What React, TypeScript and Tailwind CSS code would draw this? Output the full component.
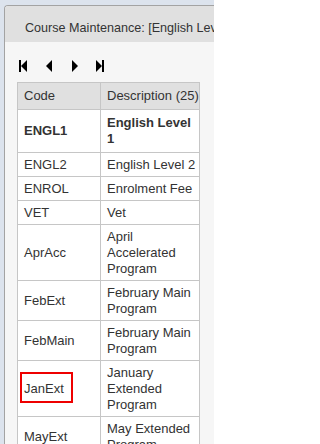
import React from "react";

type Row = { code: string; desc: string; bold?: boolean; mark?: boolean };

const rows: Row[] = [
  { code: "ENGL1", desc: "English Level 1", bold: true },
  { code: "ENGL2", desc: "English Level 2" },
  { code: "ENROL", desc: "Enrolment Fee" },
  { code: "VET", desc: "Vet" },
  { code: "AprAcc", desc: "April Accelerated Program" },
  { code: "FebExt", desc: "February Main Program" },
  { code: "FebMain", desc: "February Main Program" },
  { code: "JanExt", desc: "January Extended Program", mark: true },
  { code: "MayExt", desc: "May Extended Program" },
  { code: "NovExt", desc: "November Extended Program" },
];

function First() {
  return (
    <svg width="8" height="12" viewBox="0 0 8 12" className="block">
      <rect x="0" y="0" width="2" height="12" fill="#000" />
      <polygon points="8,0 2,6 8,12" fill="#000" />
    </svg>
  );
}
function Prev() {
  return (
    <svg width="8" height="12" viewBox="0 0 8 12" className="block">
      <polygon points="7,0 1,6 7,12" fill="#000" />
    </svg>
  );
}
function Next() {
  return (
    <svg width="8" height="12" viewBox="0 0 8 12" className="block">
      <polygon points="1,0 7,6 1,12" fill="#000" />
    </svg>
  );
}
function Last() {
  return (
    <svg width="8" height="12" viewBox="0 0 8 12" className="block">
      <polygon points="0,0 6,6 0,12" fill="#000" />
      <rect x="6" y="0" width="2" height="12" fill="#000" />
    </svg>
  );
}

export default function App() {
  return (
    <div className="w-[214px] h-[444px] overflow-hidden bg-[#dce3ed] pl-[4px] pt-[5px] font-['Liberation_Sans',Arial,sans-serif] text-[13px] text-[#333]">
      <div className="w-[240px] h-[480px] border-l border-t border-[#a3a3a3] rounded-tl-[4px] bg-[#f6f6f6] overflow-hidden">
        <div className="h-[36px] bg-[#e0e0e0] pl-[20px] pt-[14px] leading-[16px] text-[12.6px] whitespace-nowrap">
          Course Maintenance: [English Level 1]
        </div>
        <div className="pl-[12px]">
          <div className="flex items-center h-[12px] mt-[18px]">
            <div className="ml-[2px]">
              <First />
            </div>
            <div className="ml-[18px]">
              <Prev />
            </div>
            <div className="ml-[18px]">
              <Next />
            </div>
            <div className="ml-[17px]">
              <Last />
            </div>
          </div>
          <div className="mt-[10px] w-[183px] border border-[#c6c6c6] bg-white leading-[16px]">
            <div className="flex bg-[#e0e0e0]">
              <div className="w-[83px] shrink-0 border-r border-[#c6c6c6] pl-[6px] py-[5px]">Code</div>
              <div className="flex-1 pl-[6px] py-[5px] whitespace-nowrap">Description (25)</div>
            </div>
            {rows.map((r) => (
              <div key={r.code} className={`flex border-t border-[#c6c6c6] ${r.bold ? "font-bold" : ""}`}>
                <div
                  className={`relative w-[83px] shrink-0 border-r border-[#c6c6c6] pl-[6px] flex items-center ${
                    r.bold ? "py-[5px]" : "pt-[4px] pb-[3px]"
                  }`}
                >
                  {r.code}
                  {r.mark && (
                    <div className="absolute left-[2px] top-[11px] w-[53px] h-[31px] border-2 border-[#ee0000]" />
                  )}
                </div>
                <div className={`flex-1 pl-[6px] pr-[2px] ${r.bold ? "py-[5px]" : "pt-[4px] pb-[3px]"}`}>{r.desc}</div>
              </div>
            ))}
          </div>
        </div>
      </div>
    </div>
  );
}
